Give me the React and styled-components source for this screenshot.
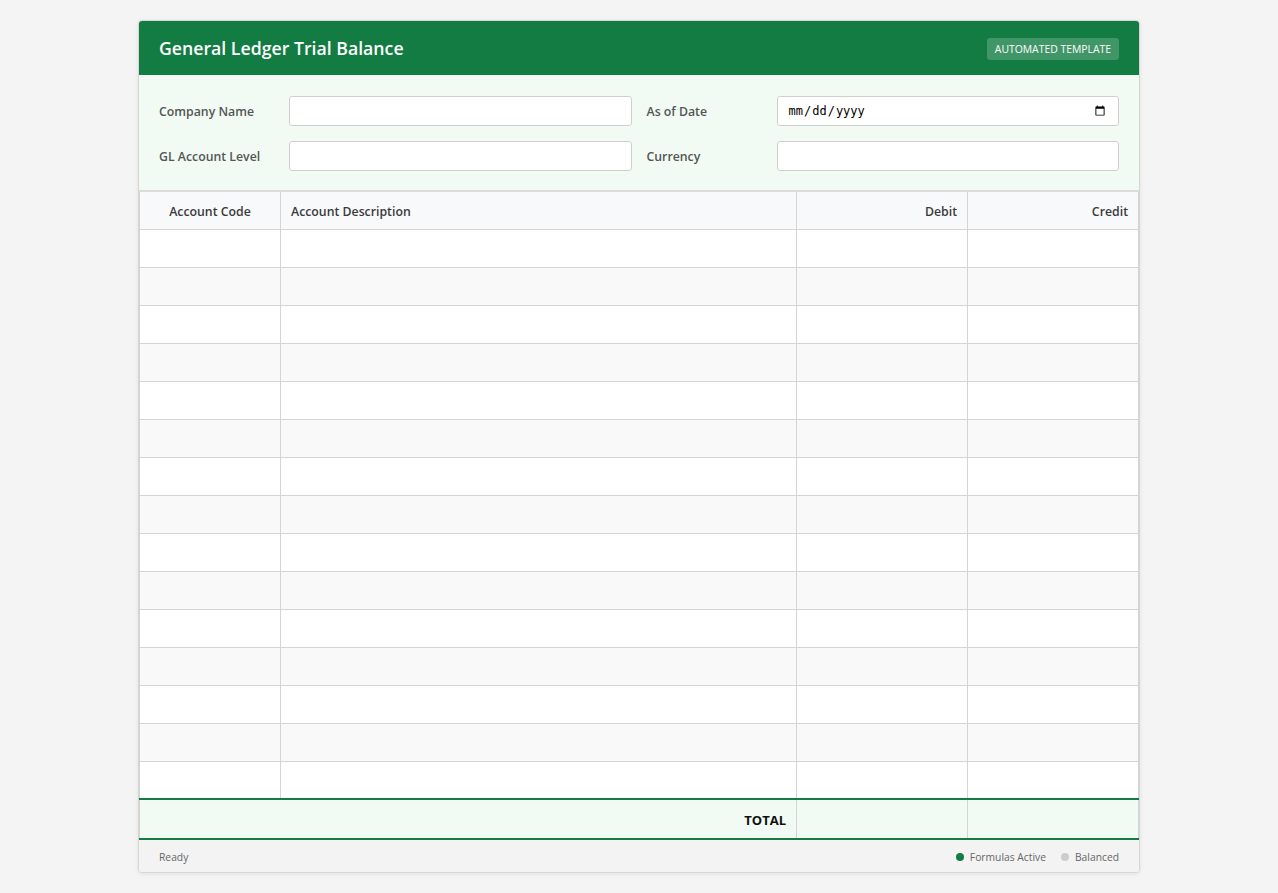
import React from 'react';
import styled, { createGlobalStyle } from 'styled-components';

const GlobalStyle = createGlobalStyle`
    body {
        margin: 0;
        background: #f4f4f4;
        font-family: "Segoe UI", "Open Sans", "Noto Sans", sans-serif;
        color: #333;
    }
`;

const ROWS = 15;

const App = () => {
    const rows = Array.from({ length: ROWS }, (_, i) => i);

    return (
        <Page>
            <GlobalStyle />
            <Card>
                <Header>
                    <Title>General Ledger Trial Balance</Title>
                    <Badge>Automated Template</Badge>
                </Header>

                <FormGrid>
                    <Label>Company Name</Label>
                    <Input type="text" />
                    <Label>As of Date</Label>
                    <Input type="date" />
                    <Label>GL Account Level</Label>
                    <Input type="text" />
                    <Label>Currency</Label>
                    <Input type="text" />
                </FormGrid>

                <Table>
                    <colgroup>
                        <col style={{ width: '141px' }} />
                        <col />
                        <col style={{ width: '171px' }} />
                        <col style={{ width: '171px' }} />
                    </colgroup>
                    <thead>
                        <tr>
                            <Th align="center">Account Code</Th>
                            <Th align="left">Account Description</Th>
                            <Th align="right">Debit</Th>
                            <Th align="right">Credit</Th>
                        </tr>
                    </thead>
                    <tbody>
                        {rows.map(r => (
                            <Row key={r}>
                                <Td />
                                <Td />
                                <Td />
                                <Td />
                            </Row>
                        ))}
                    </tbody>
                    <tfoot>
                        <TotalRow>
                            <TotalLabel colSpan={2}>TOTAL</TotalLabel>
                            <TotalCell />
                            <TotalCell />
                        </TotalRow>
                    </tfoot>
                </Table>

                <StatusBar>
                    <span>Ready</span>
                    <Indicators>
                        <Indicator><Dot active />Formulas Active</Indicator>
                        <Indicator><Dot />Balanced</Indicator>
                    </Indicators>
                </StatusBar>
            </Card>
        </Page>
    );
};

export default App;

const Page = styled.div`
    padding: 20px 0;
    display: flex;
    justify-content: center;
`;

const Card = styled.div`
    width: 1000px;
    background: #fff;
    border: 1px solid #d6d6d6;
    border-radius: 4px;
    box-shadow: 0 1px 4px rgba(0, 0, 0, 0.08);
    overflow: hidden;
`;

const Header = styled.div`
    height: 54px;
    background: #127c43;
    display: flex;
    align-items: center;
    justify-content: space-between;
    padding: 0 20px;
    color: #fff;
`;

const Title = styled.h1`
    margin: 0;
    font-size: 17.7px;
    font-weight: 600;
`;

const Badge = styled.span`
    display: inline-block;
    background: rgba(255, 255, 255, 0.2);
    border-radius: 3px;
    padding: 4px 8px;
    font-size: 10.4px;
    text-transform: uppercase;
    line-height: 14px;
    margin-top: 1px;
`;

const FormGrid = styled.div`
    background: #f1fbf4;
    padding: 21px 20px 19px 20px;
    display: grid;
    grid-template-columns: 115px 1fr 115px 1fr;
    column-gap: 15px;
    row-gap: 15px;
    align-items: center;
    border-bottom: 2px solid #dcdcdc;
`;

const Label = styled.label`
    font-size: 12.3px;
    font-weight: 600;
    color: #555;
    padding-top: 1px;
`;

const Input = styled.input`
    box-sizing: border-box;
    height: 30px;
    width: 100%;
    border: 1px solid #cfcfcf;
    border-radius: 3px;
    background: #fff;
    padding: 0 10px;
    font-size: 12px;
`;

const Table = styled.table`
    width: 100%;
    border-collapse: collapse;
    table-layout: fixed;
`;

const Th = styled.th`
    height: 37px;
    box-sizing: border-box;
    background: #f8f9fa;
    border: 1px solid #d4d4d4;
    border-top: none;
    padding: 2px 10px 0;
    text-align: ${p => p.align};
    font-size: 12.3px;
    font-weight: 600;
    color: #3a3a3a;
`;

const Row = styled.tr`
    height: 38px;
    background: #fff;
    &:nth-child(even) { background: #f9f9f9; }
`;

const Td = styled.td`
    border: 1px solid #d4d4d4;
`;

const TotalRow = styled.tr`
    height: 40px;
    background: #f1fbf4;
    border-top: 2px solid #127c43;
    border-bottom: 2px solid #127c43;
`;

const TotalLabel = styled.td`
    text-align: right;
    padding: 1px 10px 0;
    font-size: 13px;
    font-weight: 700;
    color: #111;
    border-left: 1px solid #d4d4d4;
    border-right: 1px solid #d4d4d4;
`;

const TotalCell = styled.td`
    border-right: 1px solid #d4d4d4;
`;

const StatusBar = styled.div`
    height: 32px;
    box-sizing: border-box;
    background: #f3f3f3;
    display: flex;
    align-items: center;
    justify-content: space-between;
    padding: 2px 20px 0;
    font-size: 10.3px;
    color: #666;
`;

const Indicators = styled.div`
    display: flex;
    gap: 15px;
`;

const Indicator = styled.span`
    display: flex;
    align-items: center;
    gap: 6px;
`;

const Dot = styled.span`
    width: 8px;
    height: 8px;
    border-radius: 50%;
    background: ${p => (p.active ? '#127c43' : '#cccccc')};
`;
